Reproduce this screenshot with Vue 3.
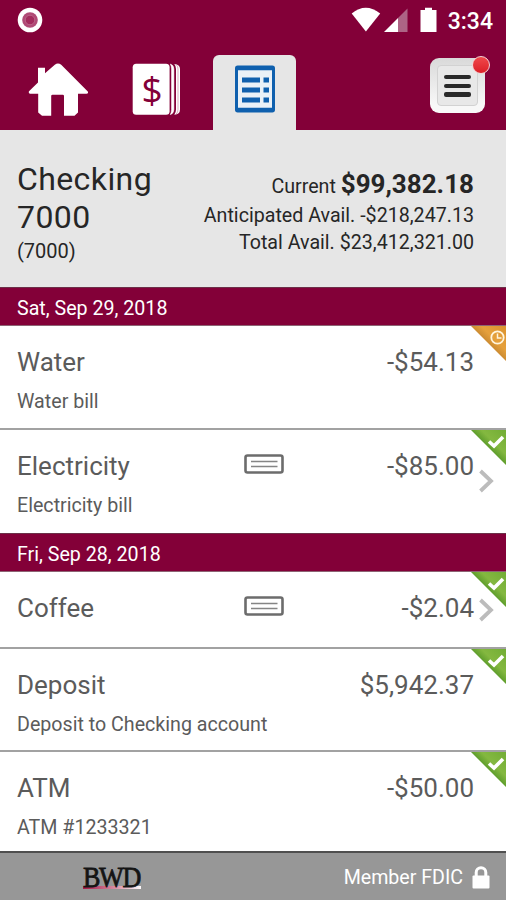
<script setup>
const groups = [
  {
    date: 'Sat, Sep 29, 2018',
    items: [
      { name: 'Water', note: 'Water bill', amount: '-$54.13', status: 'pending' },
      { name: 'Electricity', note: 'Electricity bill', amount: '-$85.00', status: 'cleared', check: true },
    ],
  },
  {
    date: 'Fri, Sep 28, 2018',
    items: [
      { name: 'Coffee', amount: '-$2.04', status: 'cleared', check: true },
      { name: 'Deposit', note: 'Deposit to Checking account', amount: '$5,942.37', status: 'cleared' },
      { name: 'ATM', note: 'ATM #1233321', amount: '-$50.00', status: 'cleared' },
    ],
  },
]
</script>

<template>
  <div class="screen">
    <div class="status">
      <svg class="record" width="26" height="26" viewBox="0 0 26 26">
        <circle cx="13" cy="13" r="12.3" fill="#fff" />
        <circle cx="13" cy="13" r="7.8" fill="#b04a76" />
        <circle cx="13" cy="13" r="4.8" fill="#a32c5e" stroke="#bd6489" stroke-width="1" />
      </svg>
      <div class="signals">
        <svg width="88" height="26" viewBox="0 0 88 26">
          <path d="M1.700 6.500Q15.700-5 30.200 6.500L15.900 24.600Z" fill="#fff" />
          <path d="M57.500 1.500V25H48V11Z" fill="#ad6485" />
          <path d="M48 11V25H34Z" fill="#fff" />
          <path d="M71 3h4V.7h7V3h4.500v22H70.500V3Z" fill="#fff" />
        </svg>
        <span class="clock">3:34</span>
      </div>
    </div>

    <nav class="tabs">
      <div class="tab home">
        <svg width="60" height="54" viewBox="0 0 60 54">
          <path
            d="M10 4.700h7v5.500l9.800-8.500q3.200-2.500 6.400 0L59.800 28.500q1 2.200-1.400 2.200H50V49.500l-3.500 3.300H36V33q0-1.200-1.200-1.200H24.500Q23.200 31.800 23.200 33v19.800H14L10.200 49.500V30.700H1.800Q.2 30 1 28.300L10 19.500Z"
            fill="#fff"
          />
        </svg>
      </div>
      <div class="tab book">
        <svg width="50" height="54" viewBox="0 0 50 54">
          <rect x=".7" y="1.700" width="36.900" height="51" rx="3.500" fill="#fff" />
          <path d="M38.300 2q3.600 1 3.600 5V47.500q0 4-3.600 5.200 1.200-2 1.200-5.200V7q0-3-1.200-5Z" fill="#fff" stroke="#fff" stroke-width=".5" />
          <path d="M42.300 2q5.700.5 5.700 5V47.500q0 4.700-5.700 5.200 1.700-2 1.700-5.200V7q0-3-1.700-5Z" fill="#fff" />
          <path d="M44 2.500q2 1.500 2 4.500V47.500q0 3-2 4.700" fill="none" stroke="#c88ba5" stroke-width=".7" />
        </svg>
        <span class="dollar">$</span>
      </div>
      <div class="tab active">
        <svg width="40" height="48" viewBox="0 0 40 48">
          <rect x="1.500" y="2" width="37" height="44" rx="1.200" fill="#eaf1f7" stroke="#0f60ae" stroke-width="3" />
          <path d="M1 3.200h38M1 44.800h38" stroke="#0f60ae" stroke-width="4" />
          <path d="M7 15h18M7 25h18M7 35h18M28.500 15h5.500M28.500 25h5.500M28.500 35h5.500" stroke="#0f60ae" stroke-width="5" />
        </svg>
      </div>
      <div class="menu">
        <span class="lines"><i /><i /><i /></span>
        <span class="badge" />
      </div>
    </nav>

    <header class="account">
      <div class="title">
        <h1>Checking<br />7000</h1>
        <p>(7000)</p>
      </div>
      <div class="balances">
        <p class="current">Current <b>$99,382.18</b></p>
        <p class="anticipated">Anticipated Avail. -$218,247.13</p>
        <p class="total">Total Avail. $23,412,321.00</p>
      </div>
    </header>

    <main>
      <section v-for="g in groups" :key="g.date">
        <h2>{{ g.date }}</h2>
        <article v-for="item in g.items" :key="item.name" :class="{ short: !item.note }">
          <div class="line">
            <span class="name">{{ item.name }}</span>
            <svg v-if="item.check" class="check" width="40" height="20" viewBox="0 0 40 20">
              <rect x="1.500" y="1.500" width="37" height="17" rx="2" fill="#fff" stroke="#6c6c6c" stroke-width="2.600" />
              <path d="M7 7.500h26.500M7 12.500h26.500" stroke="#858585" stroke-width="1.600" />
            </svg>
            <span class="amount">{{ item.amount }}</span>
          </div>
          <p v-if="item.note" class="note">{{ item.note }}</p>
          <svg v-if="item.check" class="chevron" width="15" height="24" viewBox="0 0 15 24">
            <path d="M1.500 2 12 12 1.500 22" fill="none" stroke="#bcbcbc" stroke-width="3.800" />
          </svg>
          <svg class="corner" width="36" height="36" viewBox="0 0 36 36">
            <defs>
              <linearGradient id="green" x1="0" y1="1" x2="1" y2="0">
                <stop offset=".5" stop-color="#5f9e2c" />
                <stop offset=".65" stop-color="#84b840" />
                <stop offset="1" stop-color="#72ad35" />
              </linearGradient>
              <linearGradient id="orange" x1="0" y1="1" x2="1" y2="0">
                <stop offset=".5" stop-color="#cc8b32" />
                <stop offset=".65" stop-color="#e6a13c" />
                <stop offset="1" stop-color="#db922f" />
              </linearGradient>
            </defs>
            <path d="M1 0H36V35Z" :fill="item.status === 'pending' ? 'url(#orange)' : 'url(#green)'" />
            <g v-if="item.status === 'pending'" fill="none" stroke="#fff4dc">
              <circle cx="27.500" cy="11.500" r="6.200" stroke-width="1.800" />
              <path d="M27.500 7.500v4.500h4" stroke-width="1.500" />
            </g>
            <path v-else d="M19 11.500 24 16 33 7" fill="none" stroke="#fff" stroke-width="3.600" />
          </svg>
        </article>
      </section>
    </main>

    <footer>
      <div class="logo"><span>BWD</span></div>
      <span class="member">
        Member FDIC
        <svg width="18" height="23" viewBox="0 0 18 23">
          <path d="M4.200 11V6.500a4.800 4.800 0 0 1 9.600 0V11" fill="none" stroke="#fff" stroke-width="3" />
          <rect x=".5" y="9.500" width="17" height="13" rx="1" fill="#fff" />
        </svg>
      </span>
    </footer>
  </div>
</template>

<style>
body {
  margin: 0;
}
</style>

<style scoped>
.screen {
  width: 506px;
  height: 900px;
  overflow: hidden;
  display: flex;
  flex-direction: column;
  background: #fff;
  font-family: Roboto, sans-serif;
  color: #5b5b5b;
}
h1, h2, p {
  margin: 0;
  font-weight: 400;
}
svg {
  display: block;
  flex: none;
}
.status {
  height: 55px;
  flex: none;
  box-sizing: border-box;
  display: flex;
  justify-content: space-between;
  align-items: flex-start;
  padding: 7px 13px 0 17px;
  background: #830038;
}
.signals {
  display: flex;
  gap: 10px;
}
.clock {
  color: #fff;
  font-size: 23px;
  line-height: 29px;
  font-weight: 500;
}
.tabs {
  height: 75px;
  flex: none;
  display: flex;
  align-items: flex-start;
  background: #830038;
  border-bottom: 1px solid #c3809c;
  margin-bottom: -1px;
}
.home {
  padding: 8px 0 0 28px;
}
.book {
  position: relative;
  padding: 7px 0 0 44px;
}
.dollar {
  position: absolute;
  left: 45px;
  top: 7px;
  width: 38px;
  color: #830038;
  font: 37px/54px "Open Sans", sans-serif;
  text-align: center;
}
.active {
  width: 83px;
  height: 76px;
  box-sizing: border-box;
  margin-left: 31px;
  padding: 10px 0 0 22px;
  border-radius: 6px 6px 0 0;
  background: #e6e6e6;
}
.menu {
  position: relative;
  width: 55px;
  height: 55px;
  box-sizing: border-box;
  margin: 3px 0 0 134px;
  padding: 7px;
  border-radius: 9px;
  background: linear-gradient(#d9d9d9, #f8f8f8 85%);
}
.lines {
  height: 41px;
  box-sizing: border-box;
  display: flex;
  flex-direction: column;
  gap: 4.200px;
  padding: 9px 6px 0;
  border: 1px solid #d2d2d2;
  border-radius: 4px;
  background: #e8e8e8;
}
.lines i {
  height: 4.400px;
  border-radius: 2px;
  background: #292929;
}
.badge {
  position: absolute;
  right: -5px;
  top: -2px;
  width: 16px;
  height: 16px;
  border: 1.500px solid #f3d4d4;
  border-radius: 50%;
  background: linear-gradient(#f0494b, #dc1f27);
}
.account {
  height: 157px;
  flex: none;
  box-sizing: border-box;
  display: flex;
  justify-content: space-between;
  padding: 0 32px 0 17px;
  background: #e6e6e6;
  color: #262626;
}
.title {
  padding-top: 30px;
}
h1 {
  font-size: 32px;
  line-height: 38px;
  letter-spacing: .4px;
}
.title p {
  font-size: 20px;
  line-height: 31px;
}
.balances {
  padding-top: 39px;
  text-align: right;
  font-size: 19.650px;
  line-height: 27px;
  white-space: nowrap;
}
.current {
  line-height: 31px;
}
.current b {
  font-size: 26px;
}
h2 {
  height: 39px;
  box-sizing: border-box;
  padding-left: 17px;
  border-top: 1px solid #6b3048;
  border-bottom: 1px solid #8d6474;
  background: #830038;
  color: #fff;
  font-size: 19.650px;
  line-height: 41px;
}
article {
  position: relative;
  height: 103px;
  box-sizing: border-box;
  padding: 20px 32px 0 17px;
  border-bottom: 2px solid #a2a2a2;
}
section:first-child article:first-of-type {
  height: 104px;
}
article:last-child {
  border-bottom: 0;
}
article.short {
  height: 77px;
}
.line {
  display: flex;
  justify-content: space-between;
  font-size: 26px;
  line-height: 32px;
}
.check {
  position: absolute;
  left: 244px;
  top: 24px;
}
.note {
  margin-top: 10px;
  font-size: 19.650px;
  line-height: 27px;
}
.chevron {
  position: absolute;
  right: 12px;
  top: 39px;
}
.short .chevron {
  top: 26px;
}
.corner {
  position: absolute;
  right: 0;
  top: 0;
}
main {
  flex: 1;
  min-height: 0;
}
footer {
  height: 49px;
  flex: none;
  box-sizing: border-box;
  display: flex;
  justify-content: space-between;
  align-items: center;
  padding: 0 16px 0 83px;
  border-top: 2px solid #4f4f4f;
  background: #979797;
  position: relative;
}
.logo {
  width: 58px;
  height: 24px;
  box-sizing: border-box;
  border-bottom: 3px solid;
  border-image: linear-gradient(90deg, #a41543, #dc98ac 60%, #fff) 1;
  color: #141414;
  font: 30px/24px "Liberation Serif", serif;
  letter-spacing: -1.500px;
  -webkit-text-stroke: .8px #141414;
  white-space: nowrap;
}
.logo span {
  display: inline-block;
  transform: scaleX(.87);
  transform-origin: 0 50%;
}
.member {
  display: flex;
  align-items: center;
  gap: 9px;
  padding-top: 1px;
  color: #fff;
  font-size: 19.600px;
}
</style>
